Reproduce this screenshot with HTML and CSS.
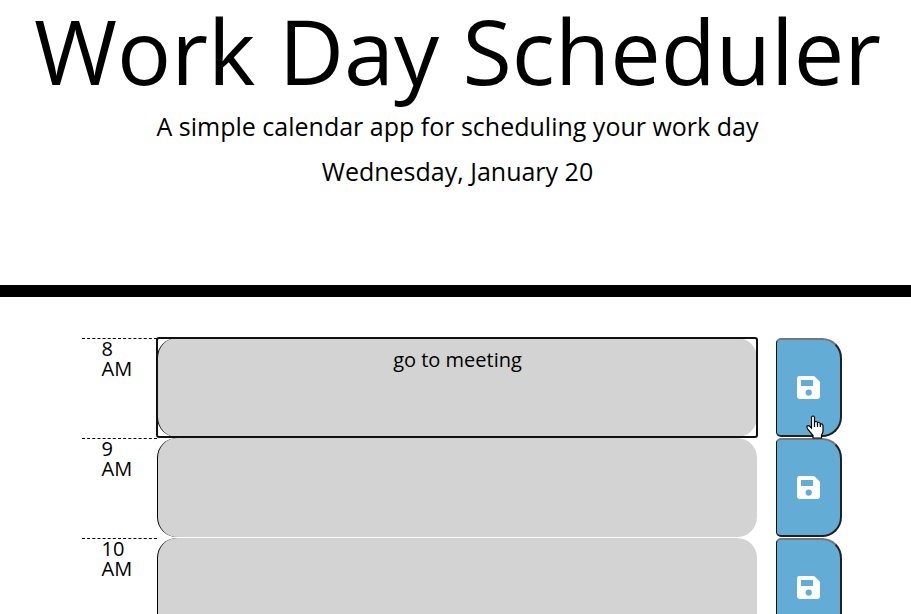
FILE: index.html
```html
<!DOCTYPE html>
<html lang="en">
<head>
<meta charset="utf-8">
<title>Work Day Scheduler</title>
<link rel="stylesheet" href="styles.css">
</head>
<body>
<svg class="defs" aria-hidden="true">
  <symbol id="save" viewBox="0 0 448 448">
    <path fill-rule="evenodd" d="M434 98 350 14Q336 0 316 0H48A48 48 0 0 0 0 48V400A48 48 0 0 0 48 448H400A48 48 0 0 0 448 400V132Q448 112 434 98ZM228 384A61 61 0 1 1 228 262A61 61 0 1 1 228 384ZM312 78V195H78V78Z"/>
  </symbol>
</svg>
<header class="jumbotron">
  <h1 class="title">Work Day Scheduler</h1>
  <p class="lead">A simple calendar app for scheduling your work day</p>
  <p class="lead">Wednesday, January 20</p>
</header>
<main class="container">
  <div class="row">
    <div class="hour">8 AM</div>
    <div class="entry focused">go to meeting</div>
    <button class="save"><svg class="icon"><use href="#save"/></svg></button>
    <svg class="pointer" viewBox="0 0 18 24"><path d="M5.500 2.500Q5.500 1 7 1Q8.500 1 8.500 2.500V8Q8.500 6.500 10 6.500Q11.500 6.500 11.500 8Q12 7.200 13 7.500Q14.300 7.700 14.300 9Q17 8.500 17 11V16Q17 18 15.500 20V23H7V20.500L2 14.500Q.3 12 1.200 11Q2.500 10 4 11.500L5.500 13Z"/><path d="M8.500 8V12M11.500 8V12M14.300 9V12"/></svg>
  </div>
  <div class="row">
    <div class="hour">9 AM</div>
    <div class="entry"></div>
    <button class="save"><svg class="icon"><use href="#save"/></svg></button>
  </div>
  <div class="row">
    <div class="hour">10 AM</div>
    <div class="entry"></div>
    <button class="save"><svg class="icon"><use href="#save"/></svg></button>
  </div>
</main>
</body>
</html>
```
FILE: styles.css
```css
* { box-sizing: border-box; }
html, body { height: 100%; overflow: hidden; }
body {
  margin: 0;
  background: #fff;
  color: #000;
  font-family: "Open Sans", sans-serif;
  font-size: 20px;
  line-height: 1;
}
.defs { display: none; }
.jumbotron {
  height: 297px;
  padding: 0 0 0 4px;
  border-bottom: 12px solid #000;
  text-align: center;
}
.title {
  margin: 0;
  padding-top: 2px;
  height: 107px;
  font-size: 90px;
  line-height: 96px;
  font-weight: 400;
  white-space: nowrap;
}
.lead {
  margin: 0 0 6px;
  font-size: 25px;
  line-height: 39px;
}
.container {
  width: 760px;
  margin: 41px 0 0 82px;
}
.row {
  position: relative;
  display: flex;
  align-items: flex-start;
  height: 100px;
}
.hour {
  width: 75px;
  padding: 0 20px 0 19.5px;
  border-top: 1px dashed #000;
}
.entry {
  width: 600px;
  height: 99px;
  margin-right: 19px;
  padding-top: 12px;
  background: #d3d3d3;
  border-left: 1px solid #000;
  border-radius: 20px;
  text-align: center;
}
.focused { position: relative; }
.focused::after {
  content: "";
  position: absolute;
  inset: -1px -1px -1px -2px;
  border: 2px solid #101010;
  border-radius: 3px;
}
.save {
  display: flex;
  align-items: center;
  justify-content: center;
  width: 66px;
  height: 99px;
  padding: 0;
  background: #62acd5;
  border: 2px solid #212121;
  border-left: 1px solid #101010;
  border-top-color: #767676;
  border-radius: 5px 20px 20px 5px;
}
.icon { width: 23px; height: 23px; fill: #fff; }
.pointer {
  position: absolute;
  left: 724px;
  top: 77px;
  width: 18px;
  height: 24px;
  fill: #fff;
  stroke: #000;
  stroke-width: 1.2;
  z-index: 2;
}
```
